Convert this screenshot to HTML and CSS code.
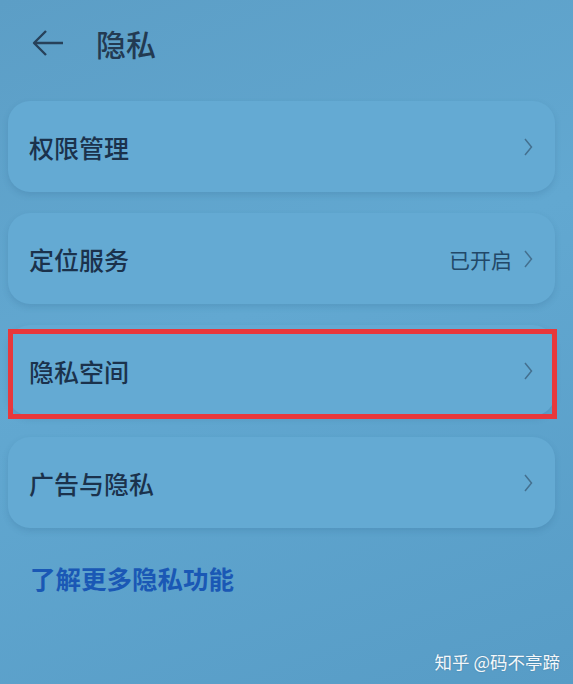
FILE: index.html
```html
<!DOCTYPE html>
<html lang="zh-CN">
<head>
   <meta charset="UTF-8">
   <meta name="viewport" content="width=device-width, initial-scale=1.0">
   <title>隐私</title>
   <link rel="stylesheet" href="styles.css">
</head>
<body>
   <div class="screen">
      <div class="header">
         <svg class="back" width="32" height="28" viewBox="0 0 32 28">
            <path d="M2 14 H31 M14 2 L2 14 L14 26" fill="none" stroke="#27415a" stroke-width="2.4" stroke-linejoin="round"/>
         </svg>
         <h1>隐私</h1>
      </div>
      <div class="list">
         <div class="card">
            <span class="label">权限管理</span>
            <svg class="chev" width="10" height="20" viewBox="0 0 10 20"><path d="M2 2 L8.5 10 L2 18" fill="none" stroke="#44708f" stroke-width="1.5"/></svg>
         </div>
         <div class="card">
            <span class="label">定位服务</span>
            <span class="value">已开启</span>
            <svg class="chev" width="10" height="20" viewBox="0 0 10 20"><path d="M2 2 L8.5 10 L2 18" fill="none" stroke="#44708f" stroke-width="1.5"/></svg>
         </div>
         <div class="card marked">
            <span class="label">隐私空间</span>
            <svg class="chev" width="10" height="20" viewBox="0 0 10 20"><path d="M2 2 L8.5 10 L2 18" fill="none" stroke="#44708f" stroke-width="1.5"/></svg>
         </div>
         <div class="card">
            <span class="label">广告与隐私</span>
            <svg class="chev" width="10" height="20" viewBox="0 0 10 20"><path d="M2 2 L8.5 10 L2 18" fill="none" stroke="#44708f" stroke-width="1.5"/></svg>
         </div>
      </div>
      <a class="more">了解更多隐私功能</a>
      <div class="mark">知乎 @码不亭蹄</div>
   </div>
</body>
</html>
```

FILE: styles.css
```css
* {
   margin: 0;
   padding: 0;
   box-sizing: border-box;
   font-family: "Noto Sans CJK SC", "Noto Sans", sans-serif;
}
body {
   background-color: #5b9fc8;
}
div.screen {
   position: relative;
   width: 573px;
   height: 684px;
   overflow: hidden;
   background: linear-gradient(160deg, #5c9ec6 0%, #62a8d1 45%, #579cc6 100%);
}
div.header {
   display: flex;
   align-items: center;
   height: 88px;
   padding-left: 32px;
   padding-bottom: 2px;
}
div.header svg.back {
   margin-right: 32px;
}
div.header h1 {
   font-size: 30px;
   font-weight: 500;
   color: #233a52;
   line-height: 1;
}
div.list {
   display: flex;
   flex-direction: column;
   gap: 21px;
   padding: 13px 18px 0 8px;
}
div.card {
   position: relative;
   display: flex;
   align-items: center;
   height: 91px;
   padding: 0 22px 0 21px;
   border-radius: 22px;
   background-color: #64aad3;
   box-shadow: 0 3px 6px rgba(40, 90, 130, 0.18);
}
div.card .label {
   flex: 1;
   font-size: 25px;
   font-weight: 500;
   color: #1b324c;
}
div.card .value {
   font-size: 21px;
   color: #224868;
   margin-right: 11px;
}
div.card svg.chev {
   display: block;
   margin-top: 1px;
}
div.card.marked::after {
   content: "";
   position: absolute;
   left: 0;
   right: -2px;
   top: 4px;
   bottom: -3px;
   border: 5px solid #e8383c;
}
a.more {
   display: block;
   margin: 31px 0 0 30px;
   font-size: 25.5px;
   font-weight: 700;
   color: #1a58b5;
}
div.mark {
   position: absolute;
   right: 13px;
   bottom: 10px;
   font-size: 17.5px;
   color: #f4f8fb;
   text-shadow: 0 0 2px rgba(0, 0, 0, 0.2);
}
```
